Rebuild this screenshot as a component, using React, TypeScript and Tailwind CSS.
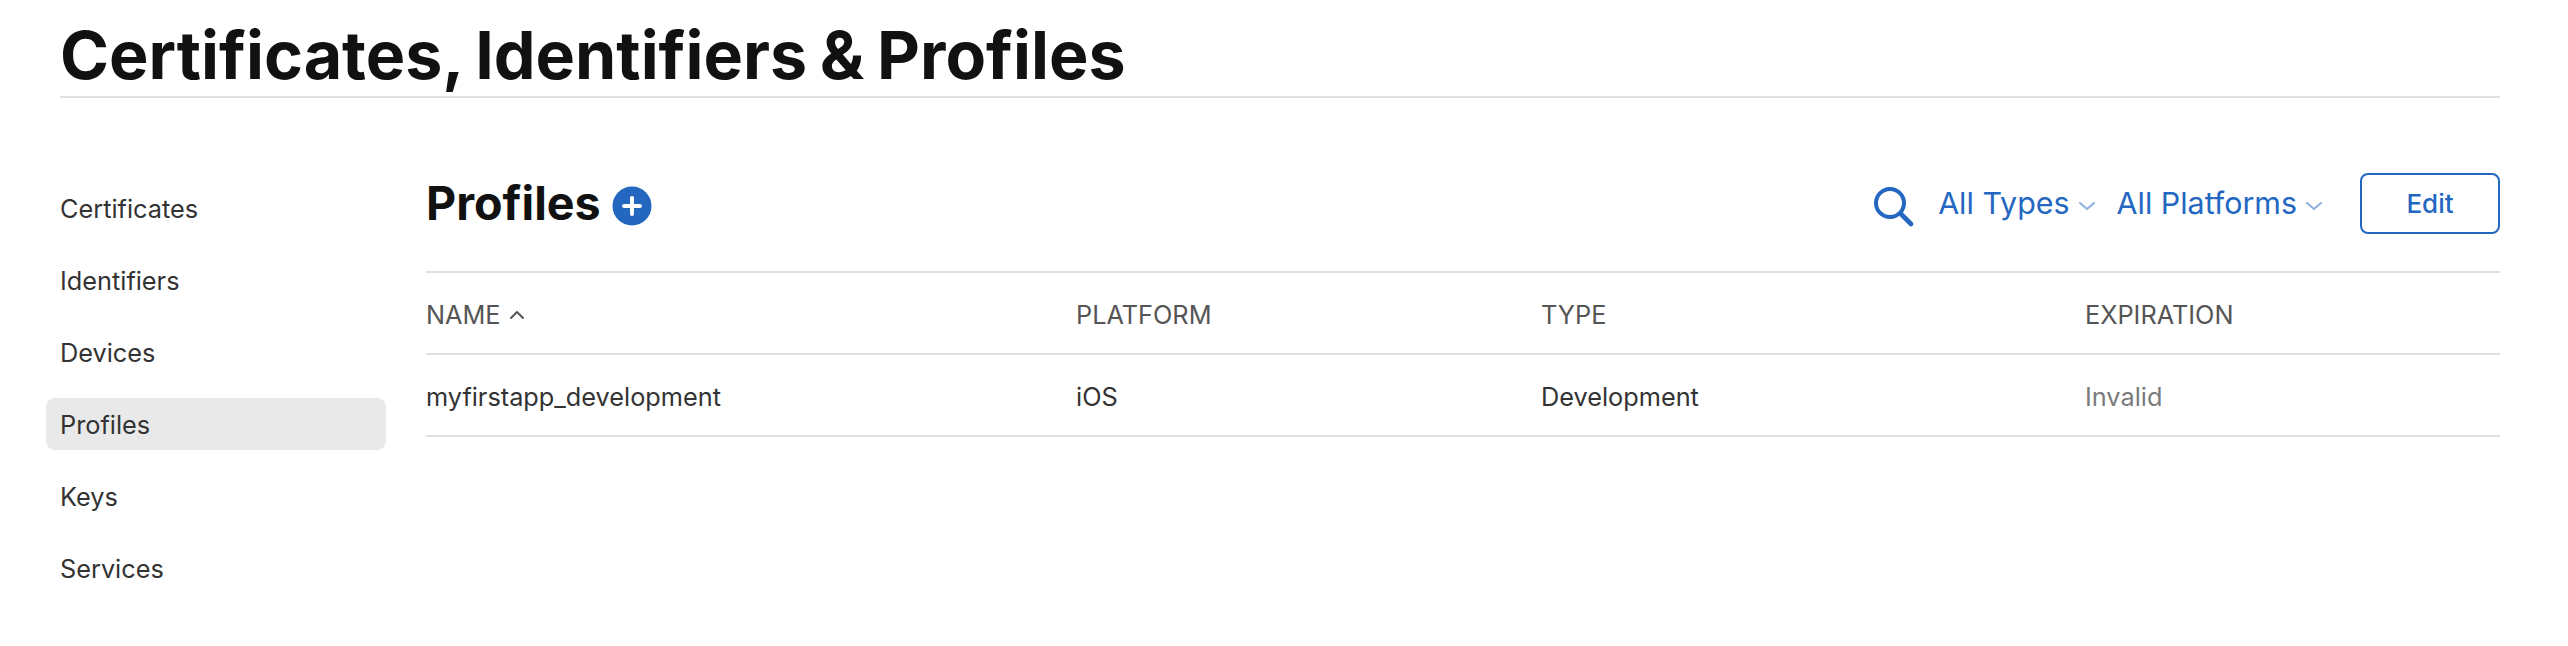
import React from "react";

const navItems = ["Certificates", "Identifiers", "Devices", "Profiles", "Keys", "Services"];

const Chevron = () => (
  <svg width="18" height="10" viewBox="0 0 18 10" fill="none" className="ml-[8px] mt-[5px] mr-[2px]">
    <path d="M2 2l7 6 7-6" stroke="#92b2e0" strokeWidth="2.2" strokeLinecap="round" strokeLinejoin="round" />
  </svg>
);

export default function App() {
  return (
    <div className="w-[2568px] h-[646px] bg-white overflow-hidden pl-[60px] pr-[68px] font-['Inter',sans-serif] text-[#333]">
      <div className="h-[98px] border-b-2 border-[#e0e0e0] flex items-end">
        <h1 className="text-[66.3px] leading-[78px] font-bold text-[#111] [word-spacing:-3px] h-[80px]">
          Certificates, Identifiers &amp; Profiles
        </h1>
      </div>

      <div className="flex mt-[75px]">
        <nav className="w-[340px] -ml-[14px] mr-[40px] flex flex-col gap-5 pt-[9px]">
          {navItems.map((item) => (
            <div
              key={item}
              className={
                "h-[52px] pl-[14px] pt-[2px] flex items-center rounded-[9px] text-[25.3px] " +
                (item === "Profiles" ? "bg-[#e9e9e9]" : "")
              }
            >
              {item}
            </div>
          ))}
        </nav>

        <div className="flex-1">
          <div className="h-[100px] flex items-start justify-between border-b-2 border-[#e0e0e0]">
            <div className="flex items-center h-[60px]">
              <h2 className="text-[46.6px] font-bold text-[#111] leading-[60px]">Profiles</h2>
              <svg width="40" height="40" viewBox="0 0 40 40" className="ml-[11px] mt-[5px]">
                <circle cx="20" cy="20" r="19.5" fill="#2367c1" />
                <path d="M20 12v16M12 20h16" stroke="#fff" strokeWidth="4" strokeLinecap="round" />
              </svg>
            </div>
            <div className="flex items-start text-[#2367c1]">
              <div className="flex items-center h-[60px] text-[30.4px]">
                <svg width="44" height="44" viewBox="0 0 44 44" fill="none" className="mr-[22px] mt-[8px]">
                  <circle cx="18" cy="18" r="14" stroke="#2367c1" strokeWidth="4" />
                  <path d="M29 29l10 10" stroke="#2367c1" strokeWidth="4.6" strokeLinecap="round" />
                </svg>
                <span className="pt-[2px]">All Types</span>
                <Chevron />
                <span className="ml-[19px] pt-[2px]">All Platforms</span>
                <Chevron />
              </div>
              <button className="w-[140px] h-[61px] ml-[35px] border-2 border-[#2367c1] rounded-[8px] text-[26px] font-medium">
                Edit
              </button>
            </div>
          </div>

          <div className="grid grid-cols-[650px_465px_544px_1fr] h-[82px] pt-[3px] items-center border-b-2 border-[#e0e0e0] text-[25.3px] text-[#555]">
            <div className="flex items-center">
              NAME
              <svg width="16" height="10" viewBox="0 0 16 10" fill="none" className="ml-[8px]">
                <path d="M2 8l6-6 6 6" stroke="#555" strokeWidth="2" strokeLinecap="round" strokeLinejoin="round" />
              </svg>
            </div>
            <div>PLATFORM</div>
            <div>TYPE</div>
            <div>EXPIRATION</div>
          </div>

          <div className="grid grid-cols-[650px_465px_544px_1fr] h-[82px] pt-[3px] items-center border-b-2 border-[#e0e0e0] text-[25.3px]">
            <div>myfirstapp_development</div>
            <div>iOS</div>
            <div>Development</div>
            <div className="text-[#7b7b7b]">Invalid</div>
          </div>
        </div>
      </div>
    </div>
  );
}
